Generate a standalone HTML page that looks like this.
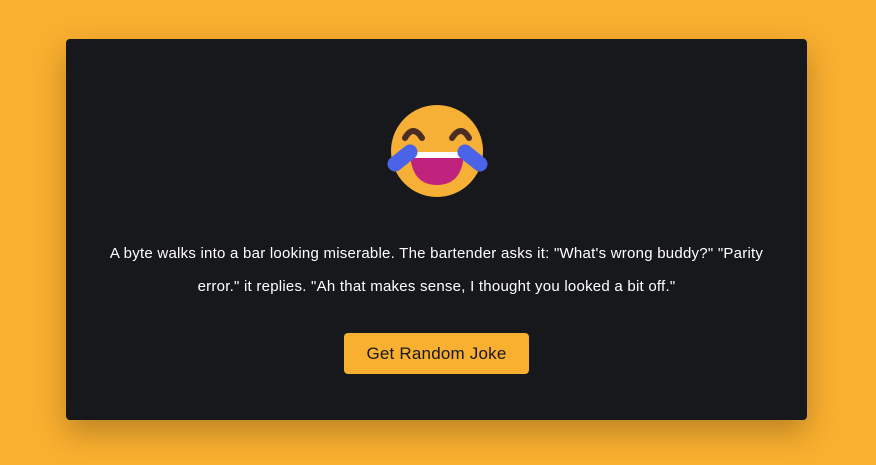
<!DOCTYPE html>
<html><head><style>
html,body{margin:0;padding:0}
body{width:876px;height:465px;background:#f9af2f;position:relative;overflow:hidden;font-family:"Liberation Sans",sans-serif}
.card{position:absolute;left:66px;top:39px;width:741px;height:381px;background:#16181b;border-radius:4px;box-shadow:0 12px 30px rgba(0,0,0,0.25)}
.joke{position:absolute;left:0;width:741px;top:198px;text-align:center;color:#fff;font-size:15px;line-height:33px;letter-spacing:0.24px}
.btn{position:absolute;left:278px;top:294px;width:185px;height:41px;background:#f9af2f;border-radius:4px;color:#16181b;font-size:17px;text-align:center;line-height:41px;letter-spacing:0.2px}
svg{position:absolute;left:0;top:0}
</style></head><body>
<div class="card">
<svg width="741" height="381" viewBox="66 39 741 381">
<circle cx="437" cy="151" r="46" fill="#f6b036"/>
<path d="M405 138 Q413 124 422 138" stroke="#4a2e25" stroke-width="6" fill="none" stroke-linecap="round"/>
<path d="M452 138 Q461 124 469 138" stroke="#4a2e25" stroke-width="6" fill="none" stroke-linecap="round"/>
<path d="M410 154 L464 154 Q462 185 437 185 Q412 185 410 154 Z" fill="#c0237d"/>
<rect x="410" y="152" width="54" height="6" fill="#fff"/>
<line x1="395" y1="164" x2="410" y2="152" stroke="#4a63e8" stroke-width="15" stroke-linecap="round"/>
<line x1="465" y1="152" x2="480" y2="164" stroke="#4a63e8" stroke-width="15" stroke-linecap="round"/>
</svg>
<div class="joke">A byte walks into a bar looking miserable. The bartender asks it: "What's wrong buddy?" "Parity<br>error." it replies. "Ah that makes sense, I thought you looked a bit off."</div>
<div class="btn">Get Random Joke</div>
</div>
</body></html>
